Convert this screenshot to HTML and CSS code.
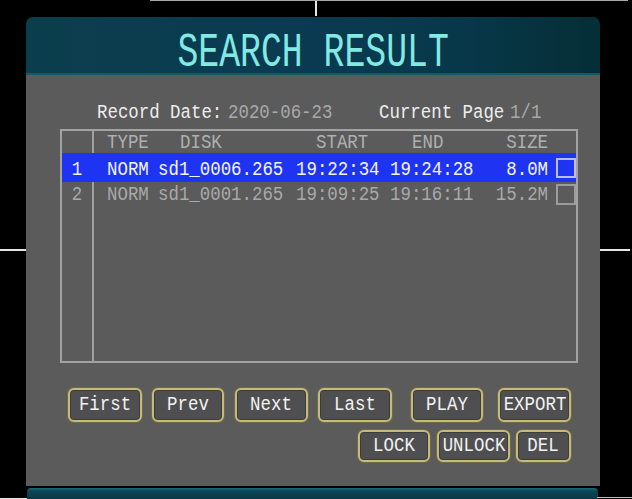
FILE: index.html
```html
<!DOCTYPE html>
<html>
<head>
<meta charset="utf-8">
<link rel="stylesheet" href="styles.css">
</head>
<body>
<div class="screen">
  <div class="panel">
    <div class="head"><span class="title">SEARCH RESULT</span></div>
    <div class="main">
      <div class="info">
        <div class="cell"><span class="t white">Record Date:</span></div>
        <div class="cell"><span class="t gray">2020-06-23</span></div>
        <div class="cell"><span class="t white">Current Page</span></div>
        <div class="cell"><span class="t gray">1/1</span></div>
      </div>
      <div class="table">
        <div class="row hdr">
          <div class="c c-idx"></div>
          <div class="c c-type"><span class="t">TYPE</span></div>
          <div class="c c-disk"><span class="t">DISK</span></div>
          <div class="c c-start"><span class="t">START</span></div>
          <div class="c c-end"><span class="t">END</span></div>
          <div class="c c-size"><span class="t tr">SIZE</span></div>
          <div class="c c-chk"></div>
        </div>
        <div class="row sel">
          <div class="c c-idx"><span class="t tc">1</span></div>
          <div class="c c-type"><span class="t">NORM</span></div>
          <div class="c c-disk"><span class="t">sd1_0006.265</span></div>
          <div class="c c-start"><span class="t">19:22:34</span></div>
          <div class="c c-end"><span class="t">19:24:28</span></div>
          <div class="c c-size"><span class="t tr">8.0M</span></div>
          <div class="c c-chk"><span class="box"></span></div>
        </div>
        <div class="row item">
          <div class="c c-idx"><span class="t tc">2</span></div>
          <div class="c c-type"><span class="t">NORM</span></div>
          <div class="c c-disk"><span class="t">sd1_0001.265</span></div>
          <div class="c c-start"><span class="t">19:09:25</span></div>
          <div class="c c-end"><span class="t">19:16:11</span></div>
          <div class="c c-size"><span class="t tr">15.2M</span></div>
          <div class="c c-chk"><span class="box"></span></div>
        </div>
      </div>
      <div class="btns r1">
        <div class="btn b-first"><span class="t tc">First</span></div>
        <div class="btn b-prev"><span class="t tc">Prev</span></div>
        <div class="btn b-next"><span class="t tc">Next</span></div>
        <div class="btn b-last"><span class="t tc">Last</span></div>
        <div class="btn b-play"><span class="t tc">PLAY</span></div>
        <div class="btn b-export"><span class="t tc">EXPORT</span></div>
      </div>
      <div class="btns r2">
        <div class="btn b-lock"><span class="t tc">LOCK</span></div>
        <div class="btn b-unlock"><span class="t tc">UNLOCK</span></div>
        <div class="btn b-del"><span class="t tc">DEL</span></div>
      </div>
    </div>
  </div>
  <div class="band"></div>
  <i class="mark m-top"></i>
  <i class="mark m-topline"></i>
  <i class="mark m-left"></i>
  <i class="mark m-right"></i>
  <i class="mark m-bl"></i>
  <i class="mark m-br"></i>
</div>
</body>
</html>
```

FILE: styles.css
```css
* { box-sizing: border-box; margin: 0; padding: 0; }
html, body { width: 632px; height: 499px; overflow: hidden; background: #000; }
body { font-family: "Liberation Mono", "DejaVu Sans Mono", monospace; }

.screen { position: relative; width: 632px; height: 499px; padding-top: 17px; }

.panel { margin-left: 26px; width: 574px; }

.head {
  height: 58px;
  border-radius: 7px 7px 0 0;
  background: linear-gradient(to right, #0b3e4c 0%, #0a3b52 45%, #07384a 75%, #052e36 100%);
  border-bottom: 2px solid #125a66;
  display: flex;
  justify-content: center;
  align-items: flex-start;
  padding-top: 12px;
}
.title {
  display: inline-block;
  font-size: 49px;
  line-height: 49px;
  color: #82e9e3;
  transform: scaleX(.71);
}

.main {
  height: 411px;
  background: #5b5b5b;
  padding-top: 27px;
}

.t {
  display: inline-block;
  white-space: pre;
  font-size: 20px;
  line-height: 22px;
  transform: scaleX(.87);
  transform-origin: left center;
}
.t.tr { transform-origin: right center; }
.t.tc { transform-origin: center center; }

.white { color: #ededed; }
.gray { color: #a9a9a9; }

.info {
  height: 22px;
  padding-left: 71px;
  display: grid;
  grid-template-columns: 131px 151px 131px 80px;
}
.cell { display: flex; }

.table {
  margin: 5px 0 0 34px;
  width: 518px;
  height: 234px;
  border: 2px solid #a3a3a3;
  background: linear-gradient(to right, transparent 30px, #a0a0a0 30px, #a0a0a0 32px, transparent 32px);
}

.row {
  display: grid;
  grid-template-columns: 32px 64px 138px 94px 94px 64px 28px;
  align-items: start;
}
.hdr { height: 22px; color: #b0b0b0; padding-top: 1px; }
.sel { height: 29px; background: #1f34f2; color: #f4f4ff; padding-top: 6px; }
.item { height: 26px; color: #a9a9a9; padding-top: 2px; }

.c { display: flex; align-items: flex-start; }
.c-idx { justify-content: center; padding-right: 2px; }
.c-type { padding-left: 13px; }
.hdr .c-disk { padding-left: 22px; }
.hdr .c-start { padding-left: 20px; }
.hdr .c-end { padding-left: 22px; }
.c-size { justify-content: flex-end; }
.c-chk { padding-left: 8px; }

.box {
  display: block;
  width: 20px;
  height: 20px;
  border: 2px solid #9c9c9c;
}
.sel .box { border-color: #b9bdf0; margin-top: -1px; }
.item .box { height: 21px; margin-top: 0; }

.btns { display: flex; }
.r1 { margin-top: 25px; padding-left: 42px; height: 34px; }
.r2 { margin-top: 8px; padding-left: 332px; height: 32px; }

.btn {
  height: 100%;
  display: flex;
  justify-content: center;
  align-items: center;
  border: 2px solid #c4bb7c;
  border-radius: 6px;
  background: #4f4f51;
  box-shadow: 0 0 0 1px #6f6a47, inset 0 0 0 1px #3c3c3c;
  color: #f2f2f2;
}
.b-first { width: 74px; }
.b-prev { width: 72px; margin-left: 10px; }
.b-next { width: 73px; margin-left: 11px; }
.b-last { width: 74px; margin-left: 10px; }
.b-play { width: 72px; margin-left: 19px; }
.b-export { width: 73px; margin-left: 15px; }
.b-lock { width: 72px; }
.b-unlock { width: 73px; margin-left: 7px; }
.b-del { width: 55px; margin-left: 6px; }

.band {
  margin: 2px 0 0 27px;
  width: 571px;
  height: 11px;
  border-radius: 4px 4px 0 0;
  background: linear-gradient(to bottom, #1b6f7c 0, #0c4656 3px, #093846 11px);
}

.mark { position: absolute; display: block; background: #e6e6e6; }
.m-top { left: 315px; top: 0; width: 2px; height: 16px; }
.m-topline { left: 150px; top: 0; width: 478px; height: 1px; background: #a8a8a8; }
.m-left { left: 0; top: 249px; width: 26px; height: 2px; }
.m-right { left: 600px; top: 249px; width: 30px; height: 2px; }
.m-bl { left: 0; top: 498px; width: 27px; height: 1px; }
.m-br { left: 597px; top: 497px; width: 35px; height: 1px; background: #bdbdbd; }
```
